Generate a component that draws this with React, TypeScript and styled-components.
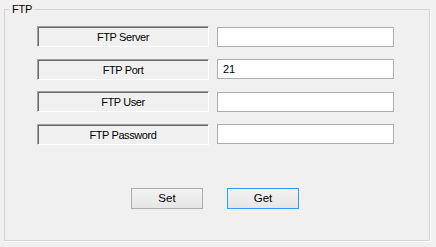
import { Fragment } from 'react';
import styled, { createGlobalStyle } from 'styled-components';

const GlobalStyle = createGlobalStyle`
  html, body {
    margin: 0;
    padding: 0;
    background: #f0f0f0;
  }
  body {
    font-family: "Liberation Sans", Arial, sans-serif;
    font-size: 11px;
    color: #000;
  }
`

const Page = styled.div`
  width: 436px;
  height: 247px;
  box-sizing: border-box;
  padding: 2px 6px 0 4px;
  background: #f0f0f0;
`

const Group = styled.fieldset`
  margin: 0;
  padding: 0;
  width: 426px;
  height: 239px;
  box-sizing: border-box;
  border: 1px solid #d5d5d5;
  box-shadow: 1px 1px 0 #ffffff;
  min-inline-size: 0;
`

const Legend = styled.legend`
  margin-left: 5px;
  padding: 0 2px;
  font-size: 11px;
  line-height: 14px;
  letter-spacing: -0.2px;
`

const Form = styled.div`
  display: grid;
  grid-template-columns: 172px 177px;
  grid-auto-rows: 21px;
  column-gap: 8px;
  row-gap: 11.5px;
  margin: 10px 0 0 32px;
`

const Caption = styled.div`
  box-sizing: border-box;
  display: flex;
  align-items: center;
  justify-content: center;
  border-top: 1px solid #a0a0a0;
  border-left: 1px solid #a0a0a0;
  border-right: 1px solid #ffffff;
  border-bottom: 1px solid #ffffff;
  box-shadow: inset 1px 1px 0 #696969;
  background: #f0f0f0;
  font-size: 11px;
  letter-spacing: -0.4px;
  padding-top: 1px;
`

const Field = styled.input`
  align-self: center;
  box-sizing: border-box;
  height: 20px;
  margin: 0;
  border: 1px solid #adadad;
  background: #ffffff;
  padding: 0 0 0 5px;
  font-family: "Liberation Sans", Arial, sans-serif;
  font-size: 11px;
  color: #000;
  outline: none;
`

const Buttons = styled.div`
  display: flex;
  gap: 24px;
  margin: 43px 0 0 126px;
`

const Button = styled.button<{ $focused?: boolean }>`
  box-sizing: border-box;
  width: 72px;
  height: 21px;
  margin: 0;
  padding: 0;
  border: 1px solid ${p => (p.$focused ? '#3399ff' : '#adadad')};
  background: linear-gradient(#f2f2f2, #e6e6e6);
  font-family: "Liberation Sans", Arial, sans-serif;
  font-size: 11.5px;
  color: #000;
`

const fields = [
  { label: 'FTP Server', value: '' },
  { label: 'FTP Port', value: '21' },
  { label: 'FTP User', value: '' },
  { label: 'FTP Password', value: '' },
]

const App = () => {
  return (
    <Page>
      <GlobalStyle />
      <Group>
        <Legend>FTP</Legend>
        <Form>
          {fields.map(f => (
            <Fragment key={f.label}>
              <Caption>{f.label}</Caption>
              <Field defaultValue={f.value} />
            </Fragment>
          ))}
        </Form>
        <Buttons>
          <Button>Set</Button>
          <Button $focused>Get</Button>
        </Buttons>
      </Group>
    </Page>
  );
};

export default App;
